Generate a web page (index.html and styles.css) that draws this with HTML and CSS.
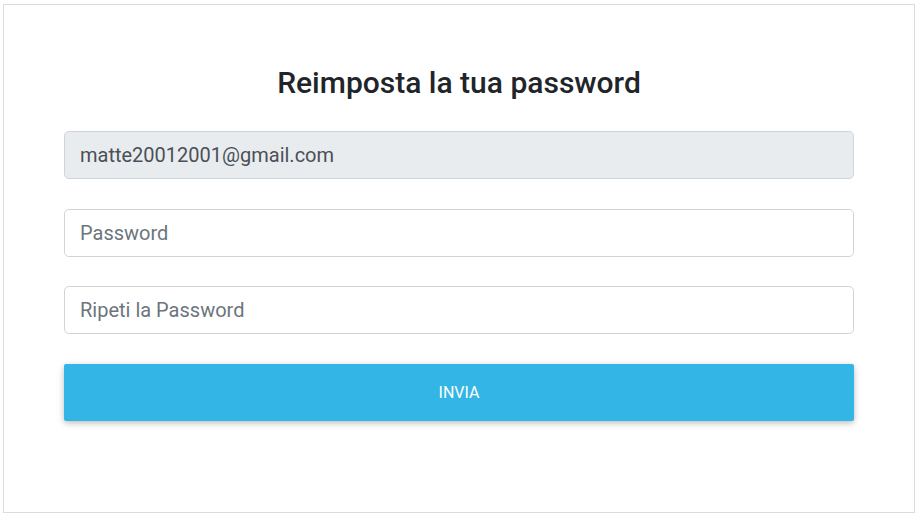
FILE: index.html
```html
<!DOCTYPE html>
<html lang="it">
<head>
<meta charset="utf-8">
<title>Reimposta la tua password</title>
<link rel="stylesheet" href="styles.css">
</head>
<body>
<div class="card">
  <h3 class="title">Reimposta la tua password</h3>
  <form class="form">
    <input class="field" type="email" value="matte20012001@gmail.com" disabled>
    <input class="field" type="password" placeholder="Password">
    <input class="field" type="password" placeholder="Ripeti la Password">
    <button class="btn" type="button">Invia</button>
  </form>
</div>
</body>
</html>
```
FILE: styles.css
```css
html, body {
  margin: 0;
  padding: 0;
  background: #fff;
}
body {
  padding: 4px 4px 5px 3px;
  font-family: Roboto, "Liberation Sans", sans-serif;
  box-sizing: border-box;
  height: 518px;
}
.card {
  box-sizing: border-box;
  width: 912px;
  height: 509px;
  border: 1px solid #dcdcdc;
  padding: 60px 60px 0 60px;
  display: flex;
  flex-direction: column;
}
.title {
  margin: 0 0 30px 0;
  text-align: center;
  font-size: 30px;
  font-weight: 500;
  line-height: 36px;
  color: #212529;
}
.form {
  display: flex;
  flex-direction: column;
}
.field {
  box-sizing: border-box;
  height: 48px;
  margin: 0 0 29.5px 0;
  padding: 8px 15px;
  border: 1px solid #ced4da;
  border-radius: 4.8px;
  font-family: Roboto, "Liberation Sans", sans-serif;
  font-size: 20px;
  line-height: 30px;
  color: #495057;
  background: #fff;
  outline: none;
}
.field:disabled {
  background: #e9ecef;
  color: #495057;
  opacity: 1;
}
.field::placeholder {
  color: #6c757d;
  opacity: 1;
}
.btn {
  height: 57px;
  margin: 0;
  border: 0;
  border-radius: 2px;
  background: #33b5e5;
  color: #fff;
  font-family: Roboto, "Liberation Sans", sans-serif;
  font-size: 16px;
  text-transform: uppercase;
  box-shadow: 0 2px 5px 0 rgba(0,0,0,.16), 0 2px 10px 0 rgba(0,0,0,.12);
  cursor: pointer;
}
```
